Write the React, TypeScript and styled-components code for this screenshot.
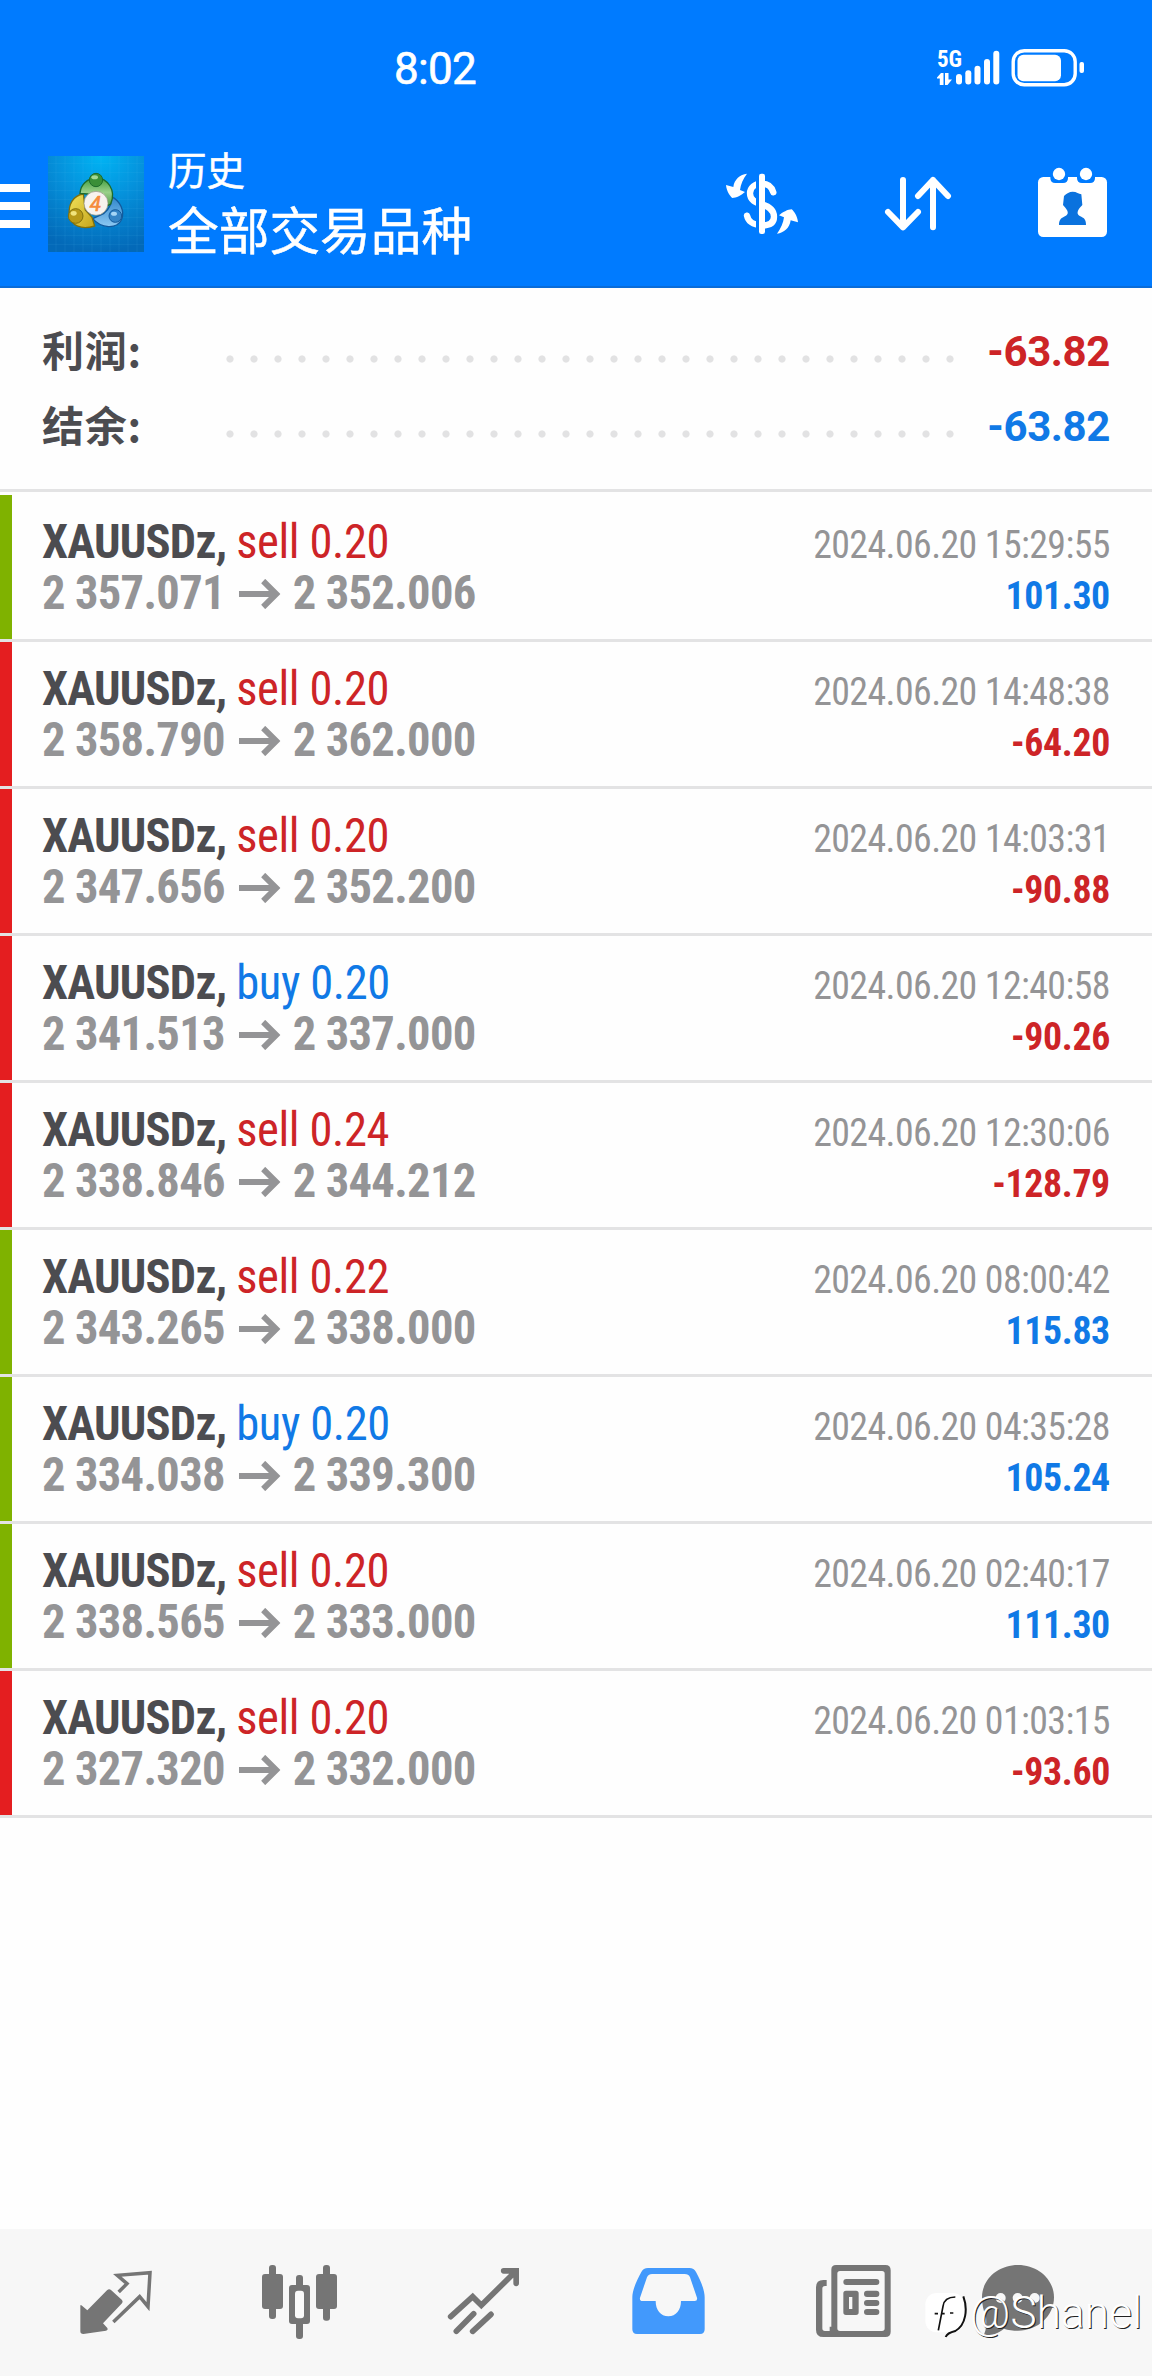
import React from "react";
import styled, { createGlobalStyle } from "styled-components";

const GlobalStyle = createGlobalStyle`
  * { box-sizing: border-box; }
  body { margin: 0; background: #fff; }
`;

const sans = `Roboto, "Noto Sans CJK SC", sans-serif`;
const condensed = `"Roboto Condensed", Roboto, "Noto Sans CJK SC", sans-serif`;
const RED = "#cd2427";
const BLUE = "#1079e6";

const Screen = styled.div`
  position: relative;
  width: 1152px;
  height: 2376px;
  display: flex;
  flex-direction: column;
  background: #fefefe;
  font-family: ${sans};
  overflow: hidden;
`;

const Top = styled.header`
  height: 288px;
  flex: none;
  background: #007bff;
  border-bottom: 2px solid #0a6cd8;
  color: #fff;
`;

const StatusBar = styled.div`
  height: 136px;
  display: flex;
  justify-content: space-between;
  padding: 48px 64px 0 394px;
`;

const Clock = styled.div`
  font-size: 44px;
  line-height: 42px;
  letter-spacing: -0.7px;
  font-weight: 400;
  -webkit-text-stroke: 0.6px #fff;
`;

const StatusIcons = styled.div`
  display: flex;
  align-items: flex-start;
  gap: 11px;
`;

const Network = styled.div`
  width: 22px;
  display: flex;
  flex-direction: column;
  padding-top: 2px;
`;

const NetworkLabel = styled.span`
  font: 700 23px/20px ${condensed};
  font-stretch: 75%;
  height: 23px;
`;

const Signal = styled.svg`
  width: 132px;
  height: 40px;
  margin-left: -14px;
`;

const Toolbar = styled.div`
  display: flex;
  padding-top: 9px;
  height: 140px;
`;

const Menu = styled.div`
  width: 30px;
  height: 44px;
  margin-top: 39px;
  display: flex;
  flex-direction: column;
  justify-content: space-between;
`;

const MenuLine = styled.span`
  height: 8px;
  background: #fff;
`;

const Logo = styled.svg`
  width: 96px;
  height: 96px;
  margin: 11px 0 0 18px;
`;

const Titles = styled.div`
  margin: 1px 0 0 24px;
  width: 531px;
  display: flex;
  flex-direction: column;
  -webkit-text-stroke: 0.5px #fff;
`;

const Subtitle = styled.span`
  font-size: 38.5px;
  line-height: 51px;
`;

const Title = styled.span`
  font-size: 50.7px;
  line-height: 71px;
`;

const Action = styled.svg<{ $w: number; $h: number; $x: number; $y: number }>`
  width: ${(p) => p.$w}px;
  height: ${(p) => p.$h}px;
  margin: ${(p) => p.$y}px 0 0 ${(p) => p.$x}px;
  flex: none;
`;

const Summary = styled.section`
  height: 204px;
  border-bottom: 3px solid #e3e3e4;
  padding: 26px 42px 0 42px;
  flex: none;
`;

const SummaryRow = styled.div`
  height: 75px;
  display: flex;
  align-items: flex-start;
`;

const SummaryLabel = styled.span`
  width: 184px;
  font-family: "Noto Sans CJK SC", sans-serif;
  font-size: 42px;
  letter-spacing: 0.7px;
  line-height: 69px;
  font-weight: 700;
  color: #4c4c50;
`;

const Dots = styled.span`
  width: 744px;
  height: 8px;
  margin-top: 41px;
  background: radial-gradient(circle at 4px 4px, #e2e2e3 3.2px, transparent 4px) 0 0 / 24px 8px;
`;

const Amount = styled.span<{ $color: string }>`
  flex: 1;
  text-align: right;
  font-size: 42px;
  letter-spacing: -0.4px;
  line-height: 75px;
  font-weight: 700;
  white-space: nowrap;
  color: ${(p) => p.$color};
`;

const List = styled.main`
  flex: 1;
  padding-top: 3px;
`;

const Deal = styled.article`
  display: flex;
  height: 147px;
  border-bottom: 3px solid #e3e3e4;
`;

const Stripe = styled.span<{ $win: boolean }>`
  width: 12px;
  background: ${(p) => (p.$win ? "#7fb200" : "#e41e20")};
`;

const DealBody = styled.div`
  flex: 1;
  display: flex;
  justify-content: space-between;
  padding: 0 42px 0 30px;
  font-family: ${condensed};
  font-stretch: 75%;
`;

const DealLeft = styled.div`
  padding-top: 21px;
  font-size: 48px;
  line-height: 51px;
  white-space: pre;
  transform: scaleX(0.97);
  transform-origin: left;
`;

const Line = styled.div`
  height: 51px;
  display: flex;
`;

const Symbol = styled.span`
  font-weight: 700;
  letter-spacing: -0.8px;
  color: #4c4c50;
`;

const Side = styled.span<{ $color: string }>`
  letter-spacing: -0.4px;
  color: ${(p) => p.$color};
`;

const Price = styled.span`
  font-weight: 700;
  letter-spacing: -0.7px;
  color: #949496;
`;

const Arrow = styled.svg`
  width: 43px;
  height: 30px;
  margin: 11.5px 13px 0 14px;
`;

const DealRight = styled.div`
  padding-top: 25px;
  font-size: 39px;
  line-height: 51px;
  text-align: right;
  transform: scaleX(0.97);
  transform-origin: right;
`;

const DateText = styled.div`
  letter-spacing: -0.6px;
  color: #949496;
`;

const Result = styled.div<{ $color: string }>`
  font-weight: 700;
  letter-spacing: -0.4px;
  color: ${(p) => p.$color};
`;

const Nav = styled.nav`
  height: 147px;
  flex: none;
  background: #f7f7f7;
  display: flex;
  align-items: flex-start;
`;

const NavIcon = styled.svg<{ $x: number; $w: number; $h: number; $y: number }>`
  flex: none;
  margin: ${(p) => p.$y}px 0 0 ${(p) => p.$x}px;
  width: ${(p) => p.$w}px;
  height: ${(p) => p.$h}px;
`;

const Watermark = styled.div`
  position: absolute;
  left: 922px;
  top: 2285px;
  display: flex;
  align-items: flex-start;
  gap: 2px;
`;

const WatermarkLogo = styled.svg`
  width: 46px;
  height: 56px;
`;

const WatermarkText = styled.span`
  font: 300 44px/56px ${sans};
  letter-spacing: 0.2px;
  color: #fff;
  text-shadow: 1px 1px 0 #222;
`;

interface DealData {
  side: "sell" | "buy";
  volume: string;
  open: string;
  close: string;
  time: string;
  profit: string;
}

const deals: DealData[] = [
  { side: "sell", volume: "0.20", open: "2 357.071", close: "2 352.006", time: "15:29:55", profit: "101.30" },
  { side: "sell", volume: "0.20", open: "2 358.790", close: "2 362.000", time: "14:48:38", profit: "-64.20" },
  { side: "sell", volume: "0.20", open: "2 347.656", close: "2 352.200", time: "14:03:31", profit: "-90.88" },
  { side: "buy", volume: "0.20", open: "2 341.513", close: "2 337.000", time: "12:40:58", profit: "-90.26" },
  { side: "sell", volume: "0.24", open: "2 338.846", close: "2 344.212", time: "12:30:06", profit: "-128.79" },
  { side: "sell", volume: "0.22", open: "2 343.265", close: "2 338.000", time: "08:00:42", profit: "115.83" },
  { side: "buy", volume: "0.20", open: "2 334.038", close: "2 339.300", time: "04:35:28", profit: "105.24" },
  { side: "sell", volume: "0.20", open: "2 338.565", close: "2 333.000", time: "02:40:17", profit: "111.30" },
  { side: "sell", volume: "0.20", open: "2 327.320", close: "2 332.000", time: "01:03:15", profit: "-93.60" },
];

const DealRow = ({ d }: { d: DealData }) => {
  const win = !d.profit.startsWith("-");
  return (
    <Deal>
      <Stripe $win={win} />
      <DealBody>
        <DealLeft>
          <Line>
            <Symbol>XAUUSDz, </Symbol>
            <Side $color={d.side === "sell" ? RED : BLUE}>
              {d.side} {d.volume}
            </Side>
          </Line>
          <Line>
            <Price>{d.open}</Price>
            <Arrow viewBox="0 0 43 30" fill="none" stroke="#949496" strokeWidth="6">
              <path d="M0 15H38M25 2L38.500 15L25 28" />
            </Arrow>
            <Price>{d.close}</Price>
          </Line>
        </DealLeft>
        <DealRight>
          <DateText>2024.06.20 {d.time}</DateText>
          <Result $color={win ? BLUE : RED}>{d.profit}</Result>
        </DealRight>
      </DealBody>
    </Deal>
  );
};

const AppLogo = () => (
  <Logo viewBox="144 78 288 288">
    <defs>
      <radialGradient id="sky" cx="0.55" cy="0" r="1">
        <stop offset="0" stopColor="#00b4f4" />
        <stop offset="0.45" stopColor="#0592dc" />
        <stop offset="1" stopColor="#0369b8" />
      </radialGradient>
      <linearGradient id="green" x2="0" y2="1">
        <stop offset="0" stopColor="#3f9c3c" />
        <stop offset="0.5" stopColor="#9ad08a" />
        <stop offset="1" stopColor="#4d9c46" />
      </linearGradient>
      <linearGradient id="yellow" x2="1" y2="1">
        <stop offset="0" stopColor="#f2e35a" />
        <stop offset="1" stopColor="#c4a51c" />
      </linearGradient>
      <linearGradient id="blue" x2="0" y2="1">
        <stop offset="0" stopColor="#2f86cc" />
        <stop offset="1" stopColor="#8cc8f2" />
      </linearGradient>
    </defs>
    <rect x="144" y="78" width="288" height="288" fill="url(#sky)" />
    <path
      d="M168 78V366M195 78V366M222 78V366M249 78V366M276 78V366M303 78V366M330 78V366M357 78V366M384 78V366M411 78V366M144 100H432M144 127H432M144 154H432M144 181H432M144 208H432M144 235H432M144 262H432M144 289H432M144 316H432M144 343H432"
      stroke="#5cc8f5"
      strokeOpacity="0.16"
      strokeWidth="2"
    />
    <path d="M334 200C360 212 376 244 364 270C350 298 304 296 278 266L312 250C330 234 338 220 334 200Z" fill="url(#blue)" stroke="#135a9c" strokeWidth="4" />
    <path d="M250 192C220 196 204 224 208 256C214 288 244 300 284 288L276 262L256 240Z" fill="url(#yellow)" stroke="#80700c" strokeWidth="4" />
    <path d="M240 190C242 162 262 146 288 144C322 144 350 180 332 222L316 230L306 192L262 192Z" fill="url(#green)" stroke="#1d6b2c" strokeWidth="4" />
    <circle cx="288" cy="150" r="20" fill="#3a8f38" stroke="#1d6b2c" strokeWidth="3" />
    <ellipse cx="284" cy="142" rx="10" ry="6" fill="#a4d894" />
    <circle cx="227" cy="258" r="22" fill="#b89a18" stroke="#80700c" strokeWidth="3" />
    <ellipse cx="221" cy="250" rx="9" ry="7" fill="#f1e47c" />
    <circle cx="346" cy="258" r="19" fill="#3585c6" stroke="#135a9c" strokeWidth="3" />
    <ellipse cx="342" cy="251" rx="9" ry="6" fill="#a6d6f6" />
    <circle cx="288" cy="220" r="36" fill="#f7f3ee" stroke="#8d8d78" strokeWidth="2" />
    <text x="286" y="242" textAnchor="middle" fontSize="62" fontStyle="italic" fontFamily="Roboto" fill="#f58a3c" stroke="#f58a3c" strokeWidth="2">
      4
    </text>
  </Logo>
);

export default function App() {
  return (
    <>
      <GlobalStyle />
      <Screen>
        <Top>
          <StatusBar>
            <Clock>8:02</Clock>
            <StatusIcons>
              <Network>
                <NetworkLabel>5G</NetworkLabel>
                <svg width="16" height="12" viewBox="0 0 16 12" fill="#fff">
                  <path d="M0 4.500L4 0H6.500V12H2.800V5.500H0ZM8 0H11.500V6.500H15L10.500 12H8Z" />
                </svg>
              </Network>
              <Signal viewBox="0 0 132 40" fill="#fff">
                <rect x="0" y="26" width="6" height="10.500" rx="3" />
                <rect x="9.300" y="22.300" width="6" height="14.200" rx="3" />
                <rect x="18.500" y="17.700" width="6" height="18.800" rx="3" />
                <rect x="28" y="11" width="6" height="25.500" rx="3" />
                <rect x="37.300" y="2.700" width="6" height="33.800" rx="3" />
                <rect x="57.200" y="2.700" width="62" height="34" rx="11" fill="none" stroke="#fff" strokeWidth="3.400" />
                <rect x="61.500" y="6.700" width="43.500" height="26.500" rx="6" />
                <rect x="123.500" y="14" width="4.500" height="11" rx="2" />
              </Signal>
            </StatusIcons>
          </StatusBar>
          <Toolbar>
            <Menu>
              <MenuLine />
              <MenuLine />
              <MenuLine />
            </Menu>
            <AppLogo />
            <Titles>
              <Subtitle>历史</Subtitle>
              <Title>全部交易品种</Title>
            </Titles>
            <Action viewBox="132 96 228 192" $w={76} $h={64} $x={25} $y={27}>
              <path
                d="M280 157C274 137 262 131 246 131C224 131 210 143 210 160C210 182 228 187 246 193C266 199 282 208 282 230C282 248 268 256 246 256C218 254 205 246 201 227"
                fill="none"
                stroke="#fff"
                strokeWidth="19"
                strokeLinecap="round"
              />
              <path d="M228 98H237V286H228Z" fill="#007bff" />
              <rect x="237" y="101" width="18" height="181" rx="7" fill="#fff" />
              <path d="M201 101C180 103 163 118 160 141L138 135C140 155 150 168 157 174C168 174 185 165 195 156L180 150C182 133 190 115 201 101Z" fill="#fff" />
              <path transform="rotate(180 246 191)" d="M201 101C180 103 163 118 160 141L138 135C140 155 150 168 157 174C168 174 185 165 195 156L180 150C182 133 190 115 201 101Z" fill="#fff" />
            </Action>
            <Action viewBox="612 108 204 168" $w={68} $h={56} $x={84} $y={31}>
              <path
                d="M669 120V262M624 216L669 262L714 216M759 262V120M714 168L759 120L804 168"
                fill="none"
                stroke="#fff"
                strokeWidth="18"
                strokeLinecap="round"
                strokeLinejoin="round"
              />
            </Action>
            <Action viewBox="1071 81 213 213" $w={71} $h={71} $x={85} $y={22}>
              <rect x="1074" y="111" width="207" height="180" rx="16" fill="#fff" />
              <path d="M1111 108H1164V114Q1164 129 1149 129H1126Q1111 129 1111 114ZM1191 108H1245V114Q1245 129 1230 129H1206Q1191 129 1191 114Z" fill="#007bff" />
              <circle cx="1137" cy="102" r="18.500" fill="#fff" />
              <circle cx="1218" cy="102" r="18.500" fill="#fff" />
              <path
                d="M1152 168C1160 160 1168 155 1178 155C1190 155 1196 162 1204 163L1207 195C1203 200 1197 205 1194 212C1190 222 1196 226 1204 230C1214 235 1218 240 1218 255H1137C1137 240 1142 235 1152 230C1160 226 1166 222 1162 212C1158 205 1153 200 1149 195Z"
                fill="#0a72de"
              />
            </Action>
          </Toolbar>
        </Top>
        <Summary>
          <SummaryRow>
            <SummaryLabel>利润:</SummaryLabel>
            <Dots />
            <Amount $color={RED}>-63.82</Amount>
          </SummaryRow>
          <SummaryRow>
            <SummaryLabel>结余:</SummaryLabel>
            <Dots />
            <Amount $color={BLUE}>-63.82</Amount>
          </SummaryRow>
        </Summary>
        <List>
          {deals.map((d) => (
            <DealRow key={d.time} d={d} />
          ))}
        </List>
        <Nav>
          <NavIcon viewBox="237 147 222 198" $w={74} $h={66} $x={79} $y={40}>
            <path d="M241 258Q241 253 246 257L262 271L321 211Q327 205 333 210L366 240Q370 245 366 250L309 310L322 324Q325 330 318 332L250 342Q241 342 241 334Z" fill="#757575" />
            <path d="M356 216L381 191L352 166L450 158L444 260L419 230L340 306" fill="none" stroke="#757575" strokeWidth="10.500" />
          </NavIcon>
          <NavIcon viewBox="783 132 231 228" $w={77} $h={76} $x={108} $y={35} fill="#757575">
            <rect x="807" y="135" width="21" height="162" rx="9" />
            <rect x="786" y="162" width="63" height="105" rx="9" />
            <rect x="888" y="165" width="21" height="192" rx="9" />
            <rect x="867" y="195" width="63" height="117" rx="9" />
            <rect x="885" y="212" width="27" height="83" rx="9" fill="#fafafa" />
            <rect x="969" y="135" width="21" height="167" rx="9" />
            <rect x="948" y="162" width="63" height="105" rx="9" />
          </NavIcon>
          <NavIcon viewBox="141 141 219 204" $w={73} $h={68} $x={109} $y={38} fill="none" stroke="#757575" strokeWidth="17" strokeLinecap="round">
            <path d="M152 290L218 230L244 256L347 154M311 152.500H348.500V190" />
            <path d="M169 334L221 281M218 334L273 283" />
            <path d="M226 270L234 278M278 270L284 280" stroke="#f7f7f7" strokeWidth="3" />
          </NavIcon>
          <NavIcon viewBox="693 141 225 204" $w={75} $h={68} $x={111} $y={38}>
            <path
              fillRule="evenodd"
              fill="#4299fc"
              d="M744 144H868Q882 144 888 156C902 182 914 210 914 232V328Q914 342 900 342H711Q697 342 697 328V232C697 210 710 182 724 156Q730 144 744 144ZM756 162H854Q866 162 870 172L891 233Q893 243 884 243H843C843 270 828 289 805 289C782 289 767 270 767 243H728Q718 243 720 233L741 172Q746 162 756 162Z"
            />
          </NavIcon>
          <NavIcon viewBox="106 132 231 222" $w={77} $h={74} $x={109} $y={35} fill="#757575">
            <path d="M141 180V198H136Q128 198 128 206V325Q128 333 136 333H156V351H131Q109 351 109 329V202Q109 180 131 180Z" />
            <path fillRule="evenodd" d="M169 135H317Q333 135 333 151V335Q333 351 317 351H150V320H155V149Q155 135 169 135ZM181 153Q173 153 173 161V325Q173 333 181 333H307Q315 333 315 325V161Q315 153 307 153Z" />
            <rect x="191" y="177" width="108" height="18" rx="9" />
            <path fillRule="evenodd" d="M199 212H229Q237 212 237 220V277Q237 285 229 285H199Q191 285 191 277V220Q191 212 199 212ZM208 231V267H218V231Z" />
            <rect x="253" y="212" width="46" height="19" rx="9" />
            <rect x="253" y="240" width="46" height="18" rx="9" />
            <rect x="253" y="267" width="46" height="18" rx="9" />
          </NavIcon>
          <NavIcon viewBox="603 132 222 222" $w={74} $h={74} $x={89} $y={35}>
            <path d="M714 135C774 135 822 178 822 232C822 288 774 332 714 332C700 332 684 330 672 326C654 340 632 350 608 351C618 334 620 318 618 290C610 272 606 252 606 232C606 178 654 135 714 135Z" fill="#757575" />
            <circle cx="662" cy="234" r="15" fill="#f7f7f7" />
            <circle cx="713" cy="234" r="15" fill="#f7f7f7" />
            <circle cx="764" cy="234" r="15" fill="#f7f7f7" />
          </NavIcon>
        </Nav>
        <Watermark>
          <WatermarkLogo viewBox="426 198 138 168">
            <rect x="436" y="222" width="116" height="118" rx="34" fill="#fff" />
            <path d="M526 234C500 234 491 246 489 262L475 334M464 284H474M484 284H494M510 282H520" fill="none" stroke="#111" strokeWidth="5" />
            <path d="M550 232C564 270 558 318 526 336C508 340 500 346 497 354" fill="none" stroke="#111" strokeWidth="6" />
          </WatermarkLogo>
          <WatermarkText>@Shanel</WatermarkText>
        </Watermark>
      </Screen>
    </>
  );
}
